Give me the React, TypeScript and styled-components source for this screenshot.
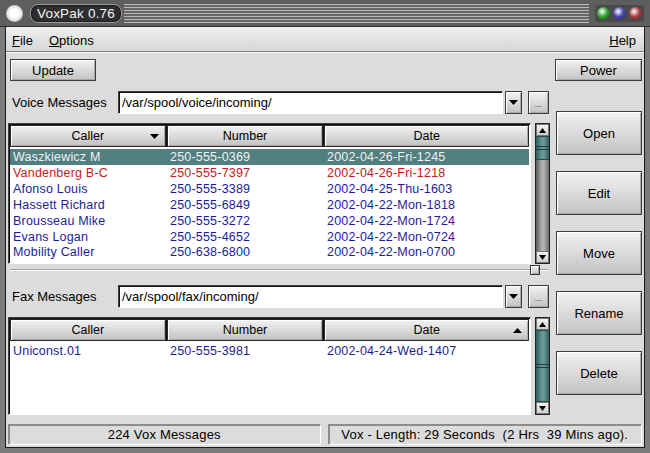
import React from "react";
import styled, { createGlobalStyle, css } from "styled-components";

const GlobalStyle = createGlobalStyle`
  html, body {
    margin: 0;
    padding: 0;
    background: #6a6a6a;
  }
  * {
    box-sizing: border-box;
  }
`;

interface Msg {
  caller: string;
  number: string;
  date: string;
  kind?: "selected" | "new";
}

const voiceMessages: Msg[] = [
  { caller: "Waszkiewicz M", number: "250-555-0369", date: "2002-04-26-Fri-1245", kind: "selected" },
  { caller: "Vandenberg B-C", number: "250-555-7397", date: "2002-04-26-Fri-1218", kind: "new" },
  { caller: "Afonso Louis", number: "250-555-3389", date: "2002-04-25-Thu-1603" },
  { caller: "Hassett Richard", number: "250-555-6849", date: "2002-04-22-Mon-1818" },
  { caller: "Brousseau Mike", number: "250-555-3272", date: "2002-04-22-Mon-1724" },
  { caller: "Evans Logan", number: "250-555-4652", date: "2002-04-22-Mon-0724" },
  { caller: "Mobility Caller", number: "250-638-6800", date: "2002-04-22-Mon-0700" },
];

const faxMessages: Msg[] = [
  { caller: "Uniconst.01", number: "250-555-3981", date: "2002-04-24-Wed-1407" },
];

const bevel = css`
  border: 1px solid #3c3c3c;
  box-shadow: inset 1px 1px 0 #ffffff, inset -1px -1px 0 #a8a8a8;
  background: linear-gradient(#f2f2f2, #d8d8d8 55%, #c2c2c2);
`;

const sunken = css`
  border: 1px solid;
  border-color: #404040 #ffffff #ffffff #404040;
  box-shadow: inset 1px 1px 0 #101010;
`;

export default function App() {
  return (
    <>
      <GlobalStyle />
      <Frame>
        <TitleBar>
          <Orb />
          <TitlePill>VoxPak 0.76</TitlePill>
          <Stripes />
          <WindowButtons>
            <Ball color="#2fa32f" />
            <Ball color="#4848b0" />
            <Ball color="#b04040" />
          </WindowButtons>
        </TitleBar>
        <Client>
          <MenuBar>
            <MenuItem>
              <u>F</u>ile
            </MenuItem>
            <MenuItem>
              <u>O</u>ptions
            </MenuItem>
            <MenuSpacer />
            <MenuItem>
              <u>H</u>elp
            </MenuItem>
          </MenuBar>
          <Content>
            <Main>
              <TopRow>
                <Button $w={86} $h={22}>Update</Button>
              </TopRow>
              <PathRow label="Voice Messages" path="/var/spool/voice/incoming/" />
              <ListArea
                rows={voiceMessages}
                height={141}
                sortColumn="caller"
                sortDir="down"
                thumb="small"
              />
              <Splitter>
                <SplitLine />
                <SplitHandle />
                <SplitTail />
              </Splitter>
              <PathRow label="Fax Messages" path="/var/spool/fax/incoming/" />
              <ListArea
                rows={faxMessages}
                height={98}
                sortColumn="date"
                sortDir="up"
                thumb="full"
              />
            </Main>
            <Side>
              <Button $w={87} $h={22}>Power</Button>
              <SideButtons>
                <Button $w={86} $h={44}>Open</Button>
                <Button $w={86} $h={44}>Edit</Button>
                <Button $w={86} $h={44}>Move</Button>
                <Button $w={86} $h={44}>Rename</Button>
                <Button $w={86} $h={44}>Delete</Button>
              </SideButtons>
            </Side>
          </Content>
          <StatusBar>
            <StatusPanel $w={313}>224 Vox Messages</StatusPanel>
            <StatusPanel $w={315}>
              Vox - Length: 29 Seconds&nbsp; (2 Hrs&nbsp; 39 Mins ago).
            </StatusPanel>
          </StatusBar>
        </Client>
      </Frame>
    </>
  );
}

interface PathRowProps {
  label: string;
  path: string;
}

function PathRow(props: PathRowProps) {
  return (
    <PathLine>
      <PathLabel>{props.label}</PathLabel>
      <PathInput>{props.path}</PathInput>
      <SmallButton $w={17}>
        <svg width="9" height="5" viewBox="0 0 9 5">
          <path d="M0 0h9L4.5 5z" fill="#000" />
        </svg>
      </SmallButton>
      <SmallButton $w={21}>
        <Dots>...</Dots>
      </SmallButton>
    </PathLine>
  );
}

interface ListAreaProps {
  rows: Msg[];
  height: number;
  sortColumn: "caller" | "date";
  sortDir: "up" | "down";
  thumb: "small" | "full";
}

function SortArrow(props: { dir: "up" | "down" }) {
  return (
    <ArrowSlot>
      <svg width="9" height="5" viewBox="0 0 9 5">
        {props.dir === "down" ? (
          <path d="M0 0h9L4.5 5z" fill="#000" />
        ) : (
          <path d="M0 5h9L4.5 0z" fill="#000" />
        )}
      </svg>
    </ArrowSlot>
  );
}

function ListArea(props: ListAreaProps) {
  const { rows, height, sortColumn, sortDir, thumb } = props;
  return (
    <ListRow style={{ height }}>
      <Table>
        <HeaderRow>
          <HeaderCell $w={156}>
            Caller
            {sortColumn === "caller" && <SortArrow dir={sortDir} />}
          </HeaderCell>
          <HeaderCell $w={157}>Number</HeaderCell>
          <HeaderCell $w={205}>
            Date
            {sortColumn === "date" && <SortArrow dir={sortDir} />}
          </HeaderCell>
        </HeaderRow>
        <Rows>
          {rows.map((r) => (
            <Row key={r.caller} $kind={r.kind}>
              <Cell $w={157}>{r.caller}</Cell>
              <Cell $w={157}>{r.number}</Cell>
              <Cell $w={200}>{r.date}</Cell>
            </Row>
          ))}
        </Rows>
      </Table>
      <ScrollBar>
        <ScrollArrow>
          <svg width="7" height="5" viewBox="0 0 7 5">
            <path d="M0 5h7L3.5 0z" fill="#000" />
          </svg>
        </ScrollArrow>
        <Track>
          {thumb === "small" ? (
            <Thumb style={{ height: 24 }}>
              <Grip />
            </Thumb>
          ) : (
            <Thumb style={{ flex: 1 }}>
              <Grip />
            </Thumb>
          )}
        </Track>
        <ScrollArrow>
          <svg width="7" height="5" viewBox="0 0 7 5">
            <path d="M0 0h7L3.5 5z" fill="#000" />
          </svg>
        </ScrollArrow>
      </ScrollBar>
    </ListRow>
  );
}

const Frame = styled.div`
  width: 650px;
  height: 453px;
  display: flex;
  flex-direction: column;
  background: #7c7c7c;
  font-family: "Liberation Sans", Arial, sans-serif;
  font-size: 13px;
  color: #000;
  overflow: hidden;
`;

const TitleBar = styled.div`
  height: 27px;
  flex: none;
  display: flex;
  align-items: center;
  padding: 0 6px 0 6px;
  background: #5e5e5e;
  border-bottom: 1px solid #2a2a2a;
`;

const Orb = styled.div`
  width: 17px;
  height: 17px;
  border-radius: 50%;
  background: radial-gradient(circle, #ffffff 35%, #e0e0e0 60%, #707070 100%);
  margin-right: 7px;
`;

const TitlePill = styled.div`
  height: 19px;
  padding: 0 6px;
  display: flex;
  align-items: center;
  border-radius: 8px;
  background: #2e2e2e;
  border: 1px solid #9a9a9a;
  box-shadow: inset 0 0 2px #000;
  color: #f4f4f4;
  font-size: 13.5px;
  letter-spacing: 0.2px;
`;

const Stripes = styled.div`
  flex: 1;
  height: 19px;
  margin: 0 6px 0 2px;
  background: repeating-linear-gradient(
    to bottom,
    #b8b8b8 0px,
    #b8b8b8 1px,
    #666666 1px,
    #666666 3px
  );
`;

const WindowButtons = styled.div`
  display: flex;
  gap: 3px;
  padding: 2px 2px;
  background: #4a4a4a;
  border-radius: 3px;
`;

const Ball = styled.div<{ color: string }>`
  width: 13px;
  height: 13px;
  border-radius: 50%;
  background: radial-gradient(circle at 40% 35%, #ffffff 0%, ${(p) => p.color} 45%, #202020 110%);
`;

const Client = styled.div`
  flex: 1;
  display: flex;
  flex-direction: column;
  margin: 0 5px 5px 5px;
  background: #dcdcdc;
  border: 1px solid #1a1a1a;
  border-top: none;
`;

const MenuBar = styled.div`
  height: 25px;
  flex: none;
  display: flex;
  align-items: center;
  gap: 16px;
  padding: 2px 8px 0 6px;
  background: linear-gradient(#f0f0f0, #d6d6d6);
  border-bottom: 1px solid #7a7a7a;
  box-shadow: 0 1px 0 #fff;
`;

const MenuItem = styled.div`
  font-size: 13px;
  & u {
    text-decoration-thickness: 1px;
  }
`;

const MenuSpacer = styled.div`
  flex: 1;
`;

const Content = styled.div`
  display: flex;
  padding: 0 3px 0 2px;
  gap: 5px;
`;

const Main = styled.div`
  width: 542px;
  display: flex;
  flex-direction: column;
`;

const Side = styled.div`
  width: 87px;
  display: flex;
  flex-direction: column;
  align-items: flex-end;
  padding-top: 7px;
`;

const SideButtons = styled.div`
  display: flex;
  flex-direction: column;
  gap: 16px;
  margin-top: 30px;
`;

const Button = styled.div<{ $w: number; $h: number }>`
  ${bevel}
  flex: none;
  width: ${(p) => p.$w}px;
  height: ${(p) => p.$h}px;
  display: flex;
  align-items: center;
  justify-content: center;
  font-size: 13px;
`;

const TopRow = styled.div`
  padding: 7px 0 0 2px;
`;

const PathLine = styled.div`
  display: flex;
  align-items: center;
  height: 23px;
  margin-top: 10px;
`;

const PathLabel = styled.div`
  flex: none;
  width: 110px;
  padding-left: 4px;
  font-size: 13px;
`;

const PathInput = styled.div`
  ${sunken}
  flex: none;
  width: 385px;
  height: 23px;
  background: #fff;
  display: flex;
  align-items: center;
  padding-left: 3px;
  font-size: 13px;
  margin-right: 2px;
`;

const SmallButton = styled.div<{ $w: number }>`
  ${bevel}
  flex: none;
  width: ${(p) => p.$w}px;
  height: 23px;
  display: flex;
  align-items: center;
  justify-content: center;
  margin-right: 6px;
  &:last-child {
    margin-right: 0;
  }
`;

const Dots = styled.span`
  font-size: 9px;
  color: #444;
  margin-top: 2px;
`;

const ListRow = styled.div`
  display: flex;
  margin-top: 9px;
  gap: 4px;
`;

const Table = styled.div`
  ${sunken}
  width: 523px;
  background: #fff;
  display: flex;
  flex-direction: column;
  padding: 1px;
  overflow: hidden;
`;

const HeaderRow = styled.div`
  display: flex;
  height: 22px;
  flex: none;
  background: #111;
  gap: 1px;
`;

const HeaderCell = styled.div<{ $w: number }>`
  ${bevel}
  border-color: #2a2a2a;
  position: relative;
  width: ${(p) => p.$w}px;
  height: 22px;
  display: flex;
  align-items: center;
  justify-content: center;
  font-size: 12.5px;
`;

const ArrowSlot = styled.span`
  position: absolute;
  right: 6px;
  top: 8px;
  display: flex;
`;

const Rows = styled.div`
  padding-top: 2px;
  flex: 1;
`;

const Row = styled.div<{ $kind?: "selected" | "new" }>`
  display: flex;
  height: 15.85px;
  align-items: center;
  font-size: 12.5px;
  letter-spacing: 0.2px;
  color: ${(p) => (p.$kind === "new" ? "#c42020" : p.$kind === "selected" ? "#f2f2f2" : "#1c1c96")};
  background: ${(p) => (p.$kind === "selected" ? "#527f80" : "transparent")};
`;

const Cell = styled.div<{ $w: number }>`
  width: ${(p) => p.$w}px;
  padding-left: 3px;
  padding-top: 1px;
  white-space: nowrap;
`;

const ScrollBar = styled.div`
  width: 15px;
  display: flex;
  flex-direction: column;
  border: 1px solid #222;
  background: #9a9a9a;
`;

const ScrollArrow = styled.div`
  height: 12px;
  flex: none;
  display: flex;
  align-items: center;
  justify-content: center;
  background: linear-gradient(#f4f4f4, #cfcfcf);
  border: 1px solid #777;
`;

const Track = styled.div`
  flex: 1;
  display: flex;
  flex-direction: column;
  background: linear-gradient(to right, #5a5a5a, #a8a8a8 40%, #b4b4b4 60%, #6a6a6a);
`;

const Thumb = styled.div`
  background: linear-gradient(to right, #2e5a5a, #5f9292 40%, #6a9a9a 60%, #345f5f);
  border-top: 1px solid #2a4848;
  border-bottom: 1px solid #2a4848;
  display: flex;
  align-items: center;
  justify-content: center;
`;

const Grip = styled.div`
  width: 100%;
  height: 4px;
  border-top: 1px solid #1e3a3a;
  border-bottom: 1px solid #1e3a3a;
`;

const Splitter = styled.div`
  display: flex;
  align-items: center;
  height: 11px;
`;

const SplitLine = styled.div`
  width: 520px;
  margin-left: 2px;
  height: 2px;
  border-top: 1px solid #a0a0a0;
  border-bottom: 1px solid #ffffff;
`;

const SplitHandle = styled.div`
  ${bevel}
  width: 10px;
  height: 10px;
  border-color: #333;
`;

const SplitTail = styled.div`
  width: 8px;
  height: 2px;
  border-top: 1px solid #a0a0a0;
  border-bottom: 1px solid #ffffff;
`;

const StatusBar = styled.div`
  display: flex;
  gap: 7px;
  padding: 0 2px 0 2px;
  margin-top: auto;
  margin-bottom: 2px;
`;

const StatusPanel = styled.div<{ $w: number }>`
  width: ${(p) => p.$w}px;
  height: 21px;
  display: flex;
  align-items: center;
  justify-content: center;
  font-size: 13px;
  border: 1px solid;
  border-color: #8c8c8c #ffffff #ffffff #8c8c8c;
  box-shadow: 1px 1px 0 #8c8c8c inset;
  letter-spacing: 0.2px;
`;
